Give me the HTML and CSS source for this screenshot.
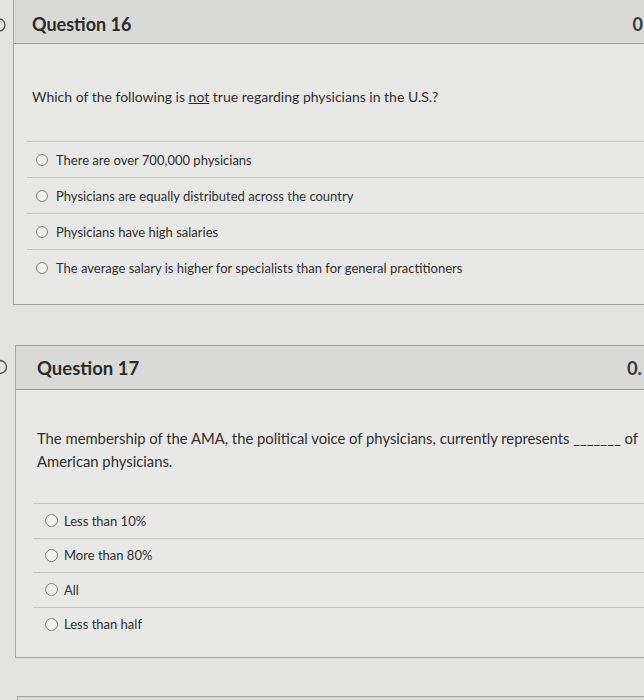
FILE: index.html
```html
<!DOCTYPE html>
<html>
<head>
<meta charset="utf-8">
<link rel="stylesheet" href="styles.css">
</head>
<body>
<div class="page">
  <section class="q q16">
    <div class="gutter">
      <svg class="flag" width="13" height="44" viewBox="0 0 13 44"><circle cx="-1" cy="26" r="6" fill="none" stroke="#555" stroke-width="1.4"/></svg>
    </div>
    <div class="card">
      <header class="head">
        <h2 class="title">Question 16</h2>
        <span class="pts">0</span>
      </header>
      <div class="body">
        <p class="prompt">Which of the following is <u>not</u> true regarding physicians in the U.S.?</p>
        <ul class="answers">
          <li class="ans"><span class="radio"></span>There are over 700,000 physicians</li>
          <li class="ans"><span class="radio"></span>Physicians are equally distributed across the country</li>
          <li class="ans"><span class="radio"></span>Physicians have high salaries</li>
          <li class="ans"><span class="radio"></span>The average salary is higher for specialists than for general practitioners</li>
        </ul>
      </div>
    </div>
  </section>

  <section class="q q17">
    <div class="gutter">
      <svg class="flag" width="15" height="44" viewBox="0 0 15 44"><circle cx="0" cy="22" r="6.5" fill="none" stroke="#555" stroke-width="1.4"/></svg>
    </div>
    <div class="card">
      <header class="head">
        <h2 class="title">Question 17</h2>
        <span class="pts">0.</span>
      </header>
      <div class="body">
        <p class="prompt">The membership of the AMA, the political voice of physicians, currently represents _______ of American physicians.</p>
        <ul class="answers">
          <li class="ans"><span class="radio"></span>Less than 10%</li>
          <li class="ans"><span class="radio"></span>More than 80%</li>
          <li class="ans"><span class="radio"></span>All</li>
          <li class="ans"><span class="radio"></span>Less than half</li>
        </ul>
      </div>
    </div>
  </section>

  <section class="q q18">
    <div class="gutter"></div>
    <div class="card">
      <header class="head"></header>
    </div>
  </section>
</div>
</body>
</html>
```

FILE: styles.css
```css
html, body {
  margin: 0;
  padding: 0;
  background: #e3e3e1;
  overflow: hidden;
  height: 700px;
}
.page {
  width: 700px;
  font-family: Lato, "Noto Sans", sans-serif;
  color: #2f2f2f;
  margin-top: -1px;
}
.q {
  display: flex;
  align-items: flex-start;
}
.gutter {
  flex: 0 0 13px;
}
.flag {
  display: block;
}
.card {
  width: 660px;
  border: 1px solid #a3a3a1;
  background: #e8e8e6;
}
.head {
  box-sizing: border-box;
  height: 44px;
  background: #d9d9d7;
  border-bottom: 1px solid #9c9c9a;
  display: flex;
  align-items: center;
  justify-content: space-between;
  padding: 4px 31px 0 18px;
}
.title {
  margin: 0;
  font-size: 18px;
  font-weight: 700;
  color: #2b2b2b;
}
.pts {
  font-size: 18px;
  font-weight: 700;
  white-space: nowrap;
  color: #3a3a3a;
}
.body {
  padding: 43px 0 19px 13px;
}
.prompt {
  margin: 0 0 34px 5px;
  font-size: 14px;
  line-height: 20px;
}
.answers {
  list-style: none;
  margin: 0;
  padding: 0;
}
.ans {
  display: flex;
  align-items: center;
  height: 35px;
  border-top: 1px solid #c4c4c2;
  font-size: 13px;
  padding-left: 9px;
}
.radio {
  width: 10px;
  height: 10px;
  border: 1.3px solid #808080;
  border-radius: 50%;
  background: #f0f0ee;
  margin-right: 8px;
  flex: 0 0 auto;
}

.q17 {
  margin-top: 40px;
}
.q17 .gutter {
  flex-basis: 15px;
}
.q17 .head {
  padding: 1px 34px 0 21px;
}
.q17 .title {
  font-size: 18.5px;
}
.q17 .pts {
  font-size: 18.5px;
}
.q17 .body {
  padding: 37px 0 16px 17px;
}
.q17 .prompt {
  font-size: 14.8px;
  line-height: 23px;
  width: 612px;
  margin: 0 0 30px 4px;
}
.q17 .ans {
  height: 33.5px;
  font-size: 13px;
  padding-left: 12px;
}
.q17 .radio {
  width: 11px;
  height: 11px;
  margin-right: 6px;
}

.q18 {
  margin-top: 38px;
}
.q18 .gutter {
  flex-basis: 17px;
}
```
